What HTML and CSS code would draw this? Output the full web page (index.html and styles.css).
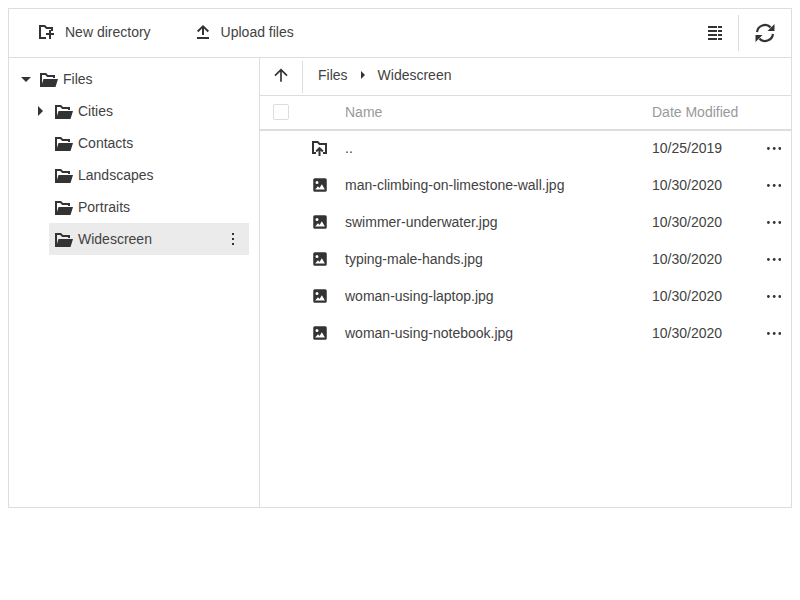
FILE: index.html
```html
<!DOCTYPE html>
<html lang="en">
    <head>
        <meta charset="UTF-8" />
        <meta name="viewport" content="width=device-width, initial-scale=1.0" />
        <title>File Manager</title>
        <link rel="stylesheet" href="styles.css">
    </head>
    <body>
        <svg class="sprite" aria-hidden="true">
            <symbol id="i-folder-open" viewBox="0 0 18 14">
                <path d="M0 0h6l2 2h7v3h-2V4H7.2l-2-2H2v12H0z" />
                <path d="M3.5 6H18l-2.5 8H1z" />
            </symbol>
            <symbol id="i-image" viewBox="0 0 24 24">
                <path fill-rule="evenodd" d="M5 3h14a2 2 0 0 1 2 2v14a2 2 0 0 1-2 2H5a2 2 0 0 1-2-2V5a2 2 0 0 1 2-2zM8 6.5a2 2 0 1 0 0 4 2 2 0 0 0 0-4zM5.5 18h13l-4-7-3.2 5-2-2.2z" />
            </symbol>
            <symbol id="i-folder-up" viewBox="0 0 15 15">
                <path d="M0 0h6l2 2h7v11h-4v-2h2V4H7.2l-2-2H2v9h2v2H0z" />
                <path d="M6.5 15V9.6L4.9 11.2 3.5 9.8 7.5 5.8l4 4-1.4 1.4-1.6-1.6V15z" />
            </symbol>
            <symbol id="i-dots" viewBox="0 0 14 3">
                <circle cx="1.4" cy="1.5" r="1.4" />
                <circle cx="7.2" cy="1.5" r="1.4" />
                <circle cx="12.8" cy="1.5" r="1.4" />
            </symbol>
        </svg>

        <div class="manager">
            <div class="toolbar">
                <button class="tool-btn tool-new" type="button">
                    <svg class="tool-icon" width="15" height="14" viewBox="0 0 15 14">
                        <path d="M0 0h6l2 2h6v4h-2V4H7.2l-2-2H2v10h5v2H0z" />
                        <path d="M10 5h2v3h3v2h-3v4h-2v-4H7V8h3z" />
                    </svg>
                    New directory
                </button>
                <button class="tool-btn tool-upload" type="button">
                    <svg class="tool-icon" width="12" height="14" viewBox="0 0 12 14">
                        <path d="M5 10V3.6L1.4 7.2 0 5.8 6 0l6 5.8-1.4 1.4L7 3.6V10z" />
                        <path d="M0 12h12v2H0z" />
                    </svg>
                    Upload files
                </button>
                <div class="toolbar-right">
                    <button class="icon-btn view-btn" type="button" aria-label="Change view">
                        <svg width="14" height="14" viewBox="0 0 14 14">
                            <path d="M0 0h9v2H0zM0 4h9v2H0zM0 8h9v2H0zM0 12h9v2H0zM10 0h4v2h-4zM10 4h4v2h-4zM10 8h4v2h-4zM10 12h4v2h-4z" />
                        </svg>
                    </button>
                    <button class="icon-btn refresh-btn" type="button" aria-label="Refresh">
                        <svg width="20" height="20" viewBox="0 0 20 20">
                            <path class="arc" d="M2 9A8 8 0 0 1 15.6 4.4" />
                            <path class="arc" d="M18 11A8 8 0 0 1 4.4 15.6" />
                            <path d="M19.5 1v7h-7zM0.5 19v-7h7z" />
                        </svg>
                    </button>
                </div>
            </div>

            <div class="main">
                <div class="tree">
                    <div class="tree-row">
                        <span class="caret-down"></span>
                        <svg class="folder"><use href="#i-folder-open" /></svg>
                        <span>Files</span>
                    </div>
                    <div class="tree-row child">
                        <span class="caret-right"></span>
                        <svg class="folder"><use href="#i-folder-open" /></svg>
                        <span>Cities</span>
                    </div>
                    <div class="tree-row child">
                        <svg class="folder"><use href="#i-folder-open" /></svg>
                        <span>Contacts</span>
                    </div>
                    <div class="tree-row child">
                        <svg class="folder"><use href="#i-folder-open" /></svg>
                        <span>Landscapes</span>
                    </div>
                    <div class="tree-row child">
                        <svg class="folder"><use href="#i-folder-open" /></svg>
                        <span>Portraits</span>
                    </div>
                    <div class="tree-row child selected">
                        <svg class="folder"><use href="#i-folder-open" /></svg>
                        <span>Widescreen</span>
                        <span class="kebab"><i></i><i></i><i></i></span>
                    </div>
                </div>

                <div class="content">
                    <div class="crumbs">
                        <button class="up-btn" type="button" aria-label="Up">
                            <svg width="20" height="20" viewBox="0 0 24 24">
                                <path d="M13,20H11V8L5.5,13.5L4.08,12.08L12,4.16L19.92,12.08L18.5,13.5L13,8V20Z" />
                            </svg>
                        </button>
                        <div class="crumb-path">
                            <span>Files</span>
                            <span class="crumb-sep"></span>
                            <span>Widescreen</span>
                        </div>
                    </div>

                    <div class="file-row file-head">
                        <span class="check-cell"><span class="checkbox"></span></span>
                        <span class="icon-cell"></span>
                        <span>Name</span>
                        <span>Date Modified</span>
                        <span></span>
                    </div>

                    <div class="file-row">
                        <span class="check-cell"></span>
                        <span class="icon-cell"><svg class="parent-icon"><use href="#i-folder-up" /></svg></span>
                        <span>..</span>
                        <span>10/25/2019</span>
                        <svg class="dots"><use href="#i-dots" /></svg>
                    </div>
                    <div class="file-row">
                        <span class="check-cell"></span>
                        <span class="icon-cell"><svg class="image-icon"><use href="#i-image" /></svg></span>
                        <span>man-climbing-on-limestone-wall.jpg</span>
                        <span>10/30/2020</span>
                        <svg class="dots"><use href="#i-dots" /></svg>
                    </div>
                    <div class="file-row">
                        <span class="check-cell"></span>
                        <span class="icon-cell"><svg class="image-icon"><use href="#i-image" /></svg></span>
                        <span>swimmer-underwater.jpg</span>
                        <span>10/30/2020</span>
                        <svg class="dots"><use href="#i-dots" /></svg>
                    </div>
                    <div class="file-row">
                        <span class="check-cell"></span>
                        <span class="icon-cell"><svg class="image-icon"><use href="#i-image" /></svg></span>
                        <span>typing-male-hands.jpg</span>
                        <span>10/30/2020</span>
                        <svg class="dots"><use href="#i-dots" /></svg>
                    </div>
                    <div class="file-row">
                        <span class="check-cell"></span>
                        <span class="icon-cell"><svg class="image-icon"><use href="#i-image" /></svg></span>
                        <span>woman-using-laptop.jpg</span>
                        <span>10/30/2020</span>
                        <svg class="dots"><use href="#i-dots" /></svg>
                    </div>
                    <div class="file-row">
                        <span class="check-cell"></span>
                        <span class="icon-cell"><svg class="image-icon"><use href="#i-image" /></svg></span>
                        <span>woman-using-notebook.jpg</span>
                        <span>10/30/2020</span>
                        <svg class="dots"><use href="#i-dots" /></svg>
                    </div>
                </div>
            </div>
        </div>
    </body>
</html>
```

FILE: styles.css
```css
body {
    font-family: "Liberation Sans", Arial, sans-serif;
    font-size: 14px;
    color: #424242;
    background-color: #fff;
    margin: 8px;
}
svg {
    fill: #333;
    display: block;
}
button {
    font: inherit;
    color: inherit;
    background: none;
    border: none;
    padding: 0;
}
.sprite {
    position: absolute;
    width: 0;
    height: 0;
}
.manager {
    height: 500px;
    box-sizing: border-box;
    border: 1px solid #ddd;
    display: flex;
    flex-direction: column;
}
.toolbar {
    height: 49px;
    box-sizing: border-box;
    border-bottom: 1px solid #ddd;
    display: flex;
    align-items: center;
    flex-shrink: 0;
}
.tool-btn {
    display: flex;
    align-items: center;
    margin-bottom: 2px;
}
.tool-new {
    margin-left: 30px;
}
.tool-upload {
    margin-left: 45px;
}
.tool-new .tool-icon {
    margin-right: 11px;
}
.tool-upload .tool-icon {
    margin: 0 12px 0 1px;
}
.toolbar-right {
    margin-left: auto;
    display: flex;
    align-items: center;
}
.icon-btn {
    height: 36px;
    display: flex;
    align-items: center;
}
.view-btn {
    width: 31px;
    box-sizing: border-box;
    border-right: 1px solid #ddd;
    margin-right: 16px;
}
.refresh-btn {
    margin-right: 16px;
}
.arc {
    fill: none;
    stroke: #333;
    stroke-width: 2.2;
}
.main {
    flex: 1;
    display: flex;
    min-height: 0;
}
.tree {
    width: 251px;
    box-sizing: border-box;
    border-right: 1px solid #ddd;
    padding: 5px 10px 0 11px;
    flex-shrink: 0;
}
.tree-row {
    height: 32px;
    display: flex;
    align-items: center;
    padding-left: 20px;
    position: relative;
}
.tree-row.child {
    margin-left: 29px;
    padding-left: 6px;
}
.folder {
    width: 18px;
    height: 14px;
    margin: 2px 5px 0 0;
}
.selected {
    background-color: #ebebeb;
}
.caret-down,
.caret-right {
    position: absolute;
    width: 0;
    height: 0;
    border-style: solid;
    border-color: transparent;
}
.caret-down {
    left: 1px;
    top: 14px;
    border-width: 5px 5px 0 5px;
    border-top-color: #333;
}
.caret-right {
    left: -11px;
    top: 11px;
    border-width: 5px 0 5px 5px;
    border-left-color: #333;
}
.kebab {
    margin-left: auto;
    margin-right: 15px;
    display: flex;
    flex-direction: column;
    gap: 3px;
}
.kebab i {
    display: block;
    width: 2px;
    height: 2px;
    background-color: #333;
}
.content {
    flex: 1;
    min-width: 0;
}
.crumbs {
    height: 38px;
    box-sizing: border-box;
    border-bottom: 1px solid #ddd;
    display: flex;
    align-items: center;
}
.up-btn {
    width: 43px;
    height: 32px;
    box-sizing: border-box;
    border-right: 1px solid #ddd;
    display: flex;
    align-items: center;
    justify-content: center;
    padding-bottom: 3px;
}
.crumb-path {
    display: flex;
    align-items: center;
    margin: 0 0 4px 15px;
}
.crumb-sep {
    width: 0;
    height: 0;
    margin: 0 13px;
    border-style: solid;
    border-color: transparent;
    border-width: 4px 0 4px 4px;
    border-left-color: #333;
}
.file-row {
    height: 37px;
    box-sizing: border-box;
    padding-bottom: 4px;
    display: grid;
    grid-template-columns: 42px 43px 307px 115px 1fr;
    align-items: center;
}
.file-head {
    height: 35px;
    padding-bottom: 2px;
    border-bottom: 2px solid #ddd;
    color: #999;
}
.check-cell {
    display: flex;
    padding-left: 13px;
}
.checkbox {
    width: 16px;
    height: 16px;
    box-sizing: border-box;
    border: 1px solid #ddd;
    border-radius: 2px;
}
.icon-cell {
    display: flex;
    padding-left: 9px;
}
.image-icon {
    width: 18px;
    height: 18px;
}
.parent-icon {
    width: 15px;
    height: 15px;
    margin: 1px 0 0 1px;
}
.dots {
    width: 14px;
    height: 3px;
    margin-top: 1px;
}
```
